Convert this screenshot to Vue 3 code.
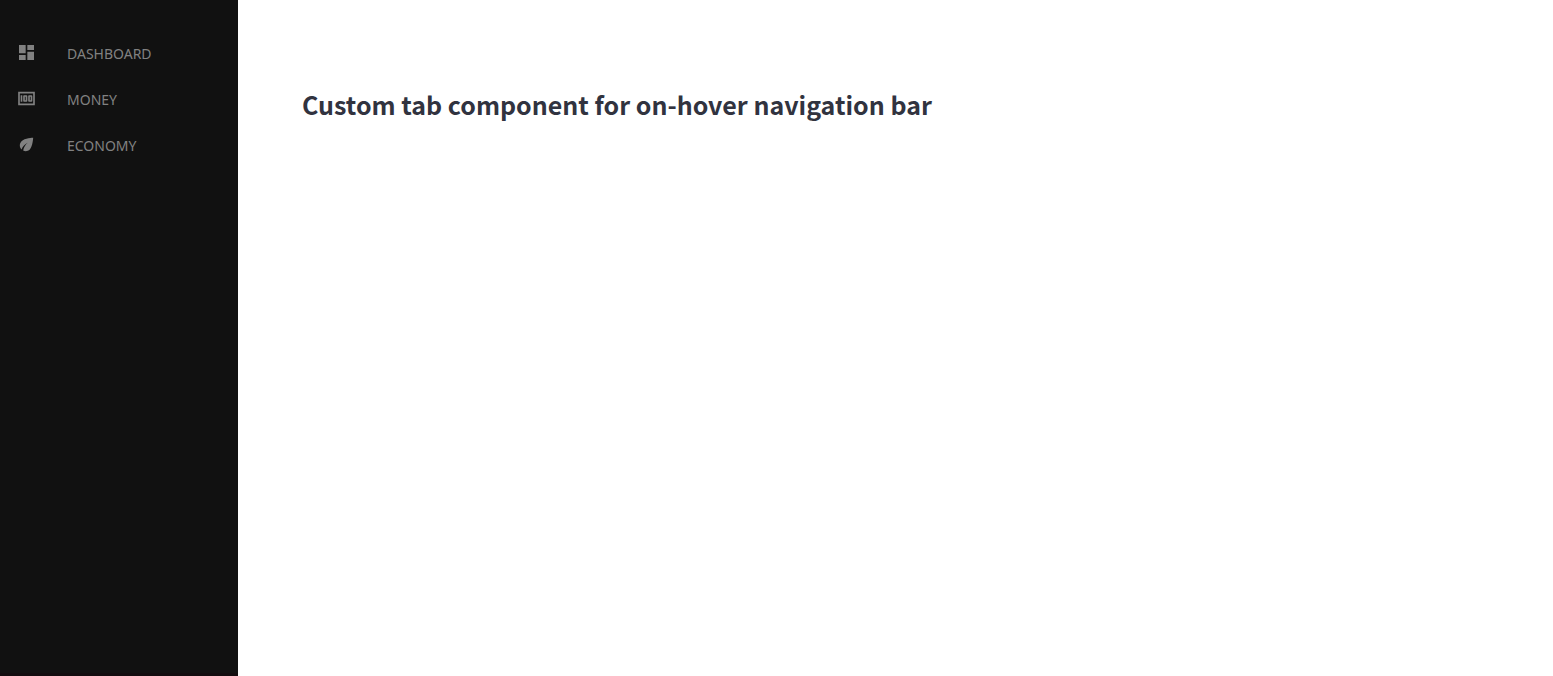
<script setup>
const tabs = [
  {
    name: 'Dashboard',
    path: 'M3 13h8V3H3v10zm0 8h8v-6H3v6zm10 0h8V11h-8v10zm0-18v6h8V3h-8z',
  },
  {
    name: 'Money',
    path: 'M5 8h2v8H5zm7 0H9c-.55 0-1 .45-1 1v6c0 .55.45 1 1 1h3c.55 0 1-.45 1-1V9c0-.55-.45-1-1-1zm-1 6h-1v-4h1v4zm7-6h-3c-.55 0-1 .45-1 1v6c0 .55.45 1 1 1h3c.55 0 1-.45 1-1V9c0-.55-.45-1-1-1zm-1 6h-1v-4h1v4zM2 4v16h20V4H2zm2 14V6h16v12H4z',
  },
  {
    name: 'Economy',
    path: 'M6.05 8.05c-2.73 2.73-2.73 7.15-.02 9.88 1.47-3.4 4.09-6.24 7.36-7.93-2.77 2.34-4.71 5.61-5.39 9.32 2.6 1.23 5.8.78 7.95-1.37C19.43 14.47 20 4 20 4S9.53 4.57 6.05 8.05z',
  },
]
</script>

<template>
  <div class="page">
    <nav class="sidebar" aria-label="Main">
      <ul class="tabs">
        <li v-for="tab in tabs" :key="tab.name">
          <a class="tab" href="#">
            <svg class="icon" viewBox="-0.6 -0.6 25.2 25.2" aria-hidden="true">
              <path :d="tab.path" />
            </svg>
            <span class="label">{{ tab.name }}</span>
          </a>
        </li>
      </ul>
    </nav>
    <main class="content">
      <h1 class="title">Custom tab component for on-hover navigation bar</h1>
    </main>
  </div>
</template>

<style>
body {
  margin: 0;
  background: #fff;
}
</style>

<style scoped>
.page {
  display: flex;
  min-height: 100vh;
}

.sidebar {
  box-sizing: border-box;
  flex: 0 0 238px;
  padding-top: 31px;
  background: #111;
  border-bottom: 3px solid #130c0f;
}

.tabs {
  margin: 0;
  padding: 0;
  list-style: none;
}

.tab {
  display: flex;
  align-items: center;
  gap: 30px;
  height: 46px;
  padding-left: 16px;
  color: #818181;
  text-decoration: none;
}

.icon {
  width: 21px;
  height: 21px;
  margin-bottom: 3px;
  fill: currentColor;
}

.label {
  font: 14px/20px "Noto Sans", "Open Sans", sans-serif;
  text-transform: uppercase;
}

.content {
  flex: 1;
  padding: 84px 64px;
}

.title {
  margin: 0;
  color: #31333f;
  font: 600 25px/40px "Source Sans Pro", "Noto Sans CJK SC", sans-serif;
}
</style>
